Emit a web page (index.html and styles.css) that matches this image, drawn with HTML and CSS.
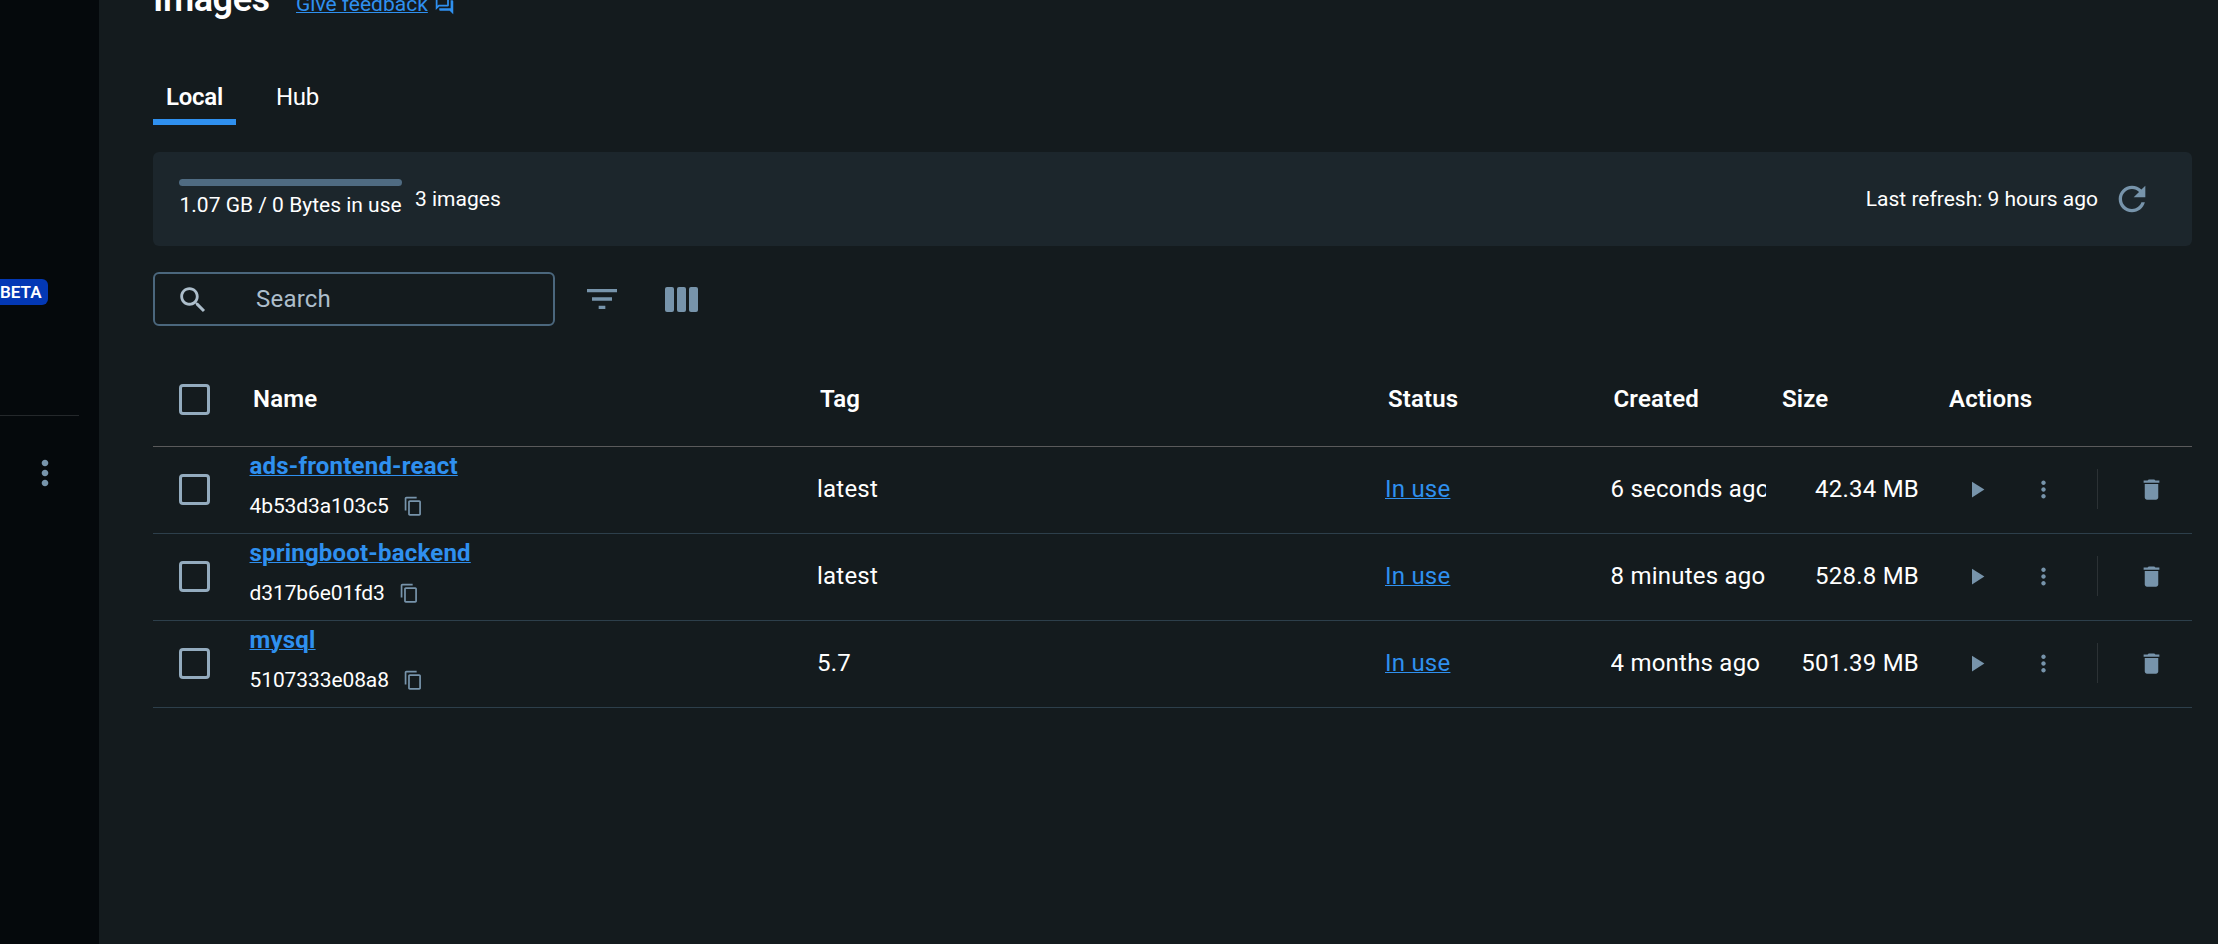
FILE: index.html
```html
<!DOCTYPE html>
<html lang="en">
<head>
<meta charset="utf-8">
<title>Images</title>
<link rel="stylesheet" href="styles.css">
</head>
<body>
<svg class="defs" aria-hidden="true">
  <symbol id="more" viewBox="0 0 24 24"><path d="M12 8c1.1 0 2-.9 2-2s-.9-2-2-2-2 .9-2 2 .9 2 2 2zm0 2c-1.1 0-2 .9-2 2s.9 2 2 2 2-.9 2-2-.9-2-2-2zm0 6c-1.1 0-2 .9-2 2s.9 2 2 2 2-.9 2-2-.9-2-2-2z"/></symbol>
  <symbol id="play" viewBox="0 0 24 24"><path d="M8 5v14l11-7z"/></symbol>
  <symbol id="trash" viewBox="0 0 24 24"><path d="M6 19c0 1.1.9 2 2 2h8c1.1 0 2-.9 2-2V7H6v12zM19 4h-3.500l-1-1h-5l-1 1H5v2h14V4z"/></symbol>
  <symbol id="copy" viewBox="0 0 24 24"><path d="M16 1H4c-1.100 0-2 .9-2 2v14h2V3h12V1zm3 4H8c-1.100 0-2 .9-2 2v14c0 1.100.9 2 2 2h11c1.100 0 2-.9 2-2V7c0-1.100-.9-2-2-2zm0 16H8V7h11v14z"/></symbol>
</svg>
<div class="app">
  <aside class="sidebar">
    <span class="beta">BETA</span>
    <hr class="side-rule">
    <svg class="icon side-more"><use href="#more"/></svg>
  </aside>
  <main class="main">
    <header class="title-row">
      <h1 class="title">Images</h1>
      <a class="link feedback">Give feedback</a>
      <svg class="feedback-icon" viewBox="0 0 24 24"><path d="M15 4v7H5.170L4 12.170V4h11m1-2H3c-.55 0-1 .45-1 1v14l4-4h10c.55 0 1-.45 1-1V3c0-.55-.45-1-1-1zm5 4h-2v9H6v2c0 .55.45 1 1 1h11l4 4V7c0-.55-.45-1-1-1z"/></svg>
    </header>
    <nav class="tabs">
      <a class="tab active">Local</a>
      <a class="tab">Hub</a>
    </nav>
    <section class="panel">
      <div class="usage">
        <div class="bar"></div>
        <span class="usage-text">1.07 GB / 0 Bytes in use</span>
      </div>
      <span class="count">3 images</span>
      <span class="refresh-text">Last refresh: 9 hours ago</span>
      <svg class="icon refresh" viewBox="0 0 24 24"><path d="M17.650 6.350C16.200 4.900 14.210 4 12 4c-4.420 0-7.990 3.580-7.990 8s3.570 8 7.990 8c3.730 0 6.840-2.550 7.730-6h-2.080c-.82 2.330-3.040 4-5.650 4-3.310 0-6-2.690-6-6s2.690-6 6-6c1.660 0 3.140.69 4.220 1.780L13 11h7V4l-2.350 2.350z"/></svg>
    </section>
    <div class="toolbar">
      <div class="search">
        <svg class="search-icon" viewBox="0 0 24 24"><path d="M15.500 14h-.79l-.28-.27C15.410 12.590 16 11.110 16 9.500 16 5.910 13.090 3 9.500 3S3 5.910 3 9.500 5.910 16 9.500 16c1.610 0 3.090-.59 4.230-1.570l.27.28v.79l5 4.990L20.490 19l-4.990-5zm-6 0C7.010 14 5 11.990 5 9.500S7.010 5 9.500 5 14 7.010 14 9.500 11.990 14 9.500 14z"/></svg>
        <span class="placeholder">Search</span>
      </div>
      <svg class="icon filter" viewBox="0 0 24 24"><path d="M10 18h4v-2h-4v2zM3 6v2h18V6H3zm3 7h12v-2H6v2z"/></svg>
      <div class="columns"><i></i><i></i><i></i></div>
    </div>
    <div class="table">
      <div class="row head">
        <div class="check"></div><div>Name</div><div>Tag</div><div>Status</div><div>Created</div><div>Size</div><div>Actions</div>
      </div>
      <div class="row">
        <div class="check"></div>
        <div class="name"><a class="link">ads-frontend-react</a><div class="id">4b53d3a103c5<svg class="copy"><use href="#copy"/></svg></div></div>
        <div>latest</div><div><a class="link">In use</a></div><div class="created">6 seconds ago</div><div class="size">42.34 MB</div>
        <div class="actions"><svg class="icon"><use href="#play"/></svg><svg class="icon"><use href="#more"/></svg><span class="divider"></span><svg class="icon"><use href="#trash"/></svg></div>
      </div>
      <div class="row">
        <div class="check"></div>
        <div class="name"><a class="link">springboot-backend</a><div class="id">d317b6e01fd3<svg class="copy"><use href="#copy"/></svg></div></div>
        <div>latest</div><div><a class="link">In use</a></div><div class="created">8 minutes ago</div><div class="size">528.8 MB</div>
        <div class="actions"><svg class="icon"><use href="#play"/></svg><svg class="icon"><use href="#more"/></svg><span class="divider"></span><svg class="icon"><use href="#trash"/></svg></div>
      </div>
      <div class="row">
        <div class="check"></div>
        <div class="name"><a class="link">mysql</a><div class="id">5107333e08a8<svg class="copy"><use href="#copy"/></svg></div></div>
        <div>5.7</div><div><a class="link">In use</a></div><div class="created">4 months ago</div><div class="size">501.39 MB</div>
        <div class="actions"><svg class="icon"><use href="#play"/></svg><svg class="icon"><use href="#more"/></svg><span class="divider"></span><svg class="icon"><use href="#trash"/></svg></div>
      </div>
    </div>
  </main>
</div>
</body>
</html>
```
FILE: styles.css
```css
* { box-sizing: border-box; }
body { margin: 0; background: #141b1e; color: #fff; font-family: Roboto, sans-serif; }
svg { display: block; flex: none; }
.defs { position: absolute; width: 0; height: 0; }
.app { display: flex; height: 944px; overflow: hidden; }
.icon { fill: #7794ab; }
.link { color: #2f90ef; text-decoration: underline; text-decoration-thickness: 1px; text-underline-offset: 1px; text-decoration-skip-ink: auto; }

.sidebar { width: 99px; flex: none; background: #05090c; padding-top: 279px; }
.beta { display: block; width: 48px; height: 26px; padding-right: 7px; background: #0338b5; border-radius: 0 6px 6px 0; font-size: 17px; font-weight: 600; line-height: 27px; text-align: right; }
.side-rule { width: 79px; height: 1px; margin: 110px 0 0; border: 0; background: #24282b; }
.side-more { width: 40px; height: 40px; margin: 37px 0 0 25.3px; }

.main { flex: 1; padding: 0 26px 0 54px; }
.title-row { display: flex; height: 24px; margin-top: -6px; }
.title { width: 142px; margin: -16px 0 0; font-size: 36px; font-weight: 600; line-height: 42px; letter-spacing: -.45px; }
.feedback { margin: -6px 0 0 1px; font-size: 21px; line-height: 32px; }
.feedback-icon { width: 21px; height: 21px; margin: 1px 0 0 6px; fill: #2f90ef; }
.tabs { display: flex; height: 107px; padding-top: 60px; font-size: 24px; }
.tab { height: 47px; padding: 4px 13px 0; line-height: 31px; }
.tab + .tab { margin-left: 27px; letter-spacing: -.3px; }
.tab.active { width: 83px; padding-left: 13px; border-bottom: 6px solid #2f90ef; font-weight: 600; letter-spacing: -.25px; }

.panel { display: flex; height: 94px; margin-top: 27px; padding: 0 40px 0 26px; align-items: center; background: #1c262c; border-radius: 6px; font-size: 21px; line-height: 30px; }
.usage { width: 223px; height: 40px; }
.bar { height: 7px; border-radius: 4px; background: #4f6b82; }
.usage-text { display: block; margin: 4px 0 0 .5px; white-space: nowrap; }
.count { margin-left: 13px; }
.refresh-text { margin-left: auto; }
.refresh { width: 40px; height: 40px; margin-left: 14px; }

.toolbar { display: flex; margin-top: 26px; align-items: center; }
.search { display: flex; width: 402px; height: 54px; align-items: center; border: 2px solid #4b677d; border-radius: 6px; }
.search-icon { width: 34px; height: 34px; margin: 1px 0 0 21px; fill: #adbecb; }
.placeholder { margin: 0 0 0 46px; color: #adbecb; font-size: 24px; letter-spacing: .2px; }
.filter { width: 40px; height: 40px; margin-left: 27px; }
.columns { display: flex; height: 25px; margin-left: 43px; gap: 3px; }
.columns i { width: 9px; border-radius: 2px; background: #7794ab; }

.table { margin-top: 26px; font-size: 24px; letter-spacing: .225px; }
.row { display: grid; grid-template-columns: 96px 568px 568px 225.500px 170.500px 167px 1fr; height: 87px; padding-bottom: 2px; align-items: center; border-bottom: 1px solid #2d3f4b; white-space: nowrap; }
.head { height: 95px; padding-bottom: 0; border-color: #5a5a5b; font-weight: 600; }
.head > div:not(.check) { padding-left: 3px; letter-spacing: .15px; }
.head > div:nth-child(2) { padding-left: 4px; }
.head > div:nth-child(6), .head > div:nth-child(7) { padding-left: 1px; }
.check { width: 31px; height: 31px; margin-left: 26px; border: 3px solid #93abbe; border-radius: 4px; }
.name { height: 84px; padding: 3px 0 0 .5px; line-height: 32px; }
.name .link { display: block; width: max-content; font-weight: 700; letter-spacing: .2px; }
.id { display: flex; margin-top: 8px; font-size: 21px; letter-spacing: -.1px; line-height: 32px; align-items: center; }
.copy { width: 20.5px; height: 20.5px; margin: 1px 0 0 14px; fill: #7794ab; }
.created { width: 155px; overflow: hidden; }
.size { width: 138px; text-align: right; }
.actions { display: flex; padding-left: 15px; align-items: center; }
.actions .icon { width: 27px; height: 27px; }
.actions .icon + .icon { margin-left: 40px; }
.divider { width: 1px; height: 40px; margin: 0 40px; background: #2c3235; }
```
